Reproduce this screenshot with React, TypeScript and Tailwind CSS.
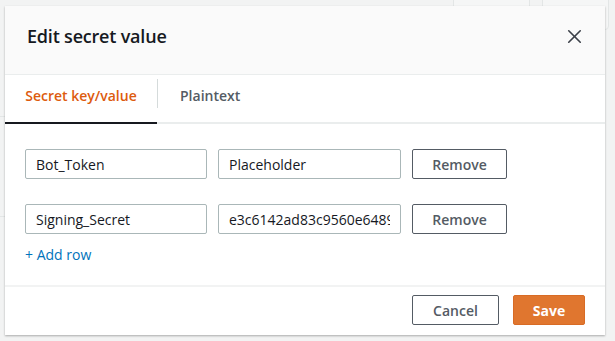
import { X } from "lucide-react";

const rows = [
  { key: "Bot_Token", value: "Placeholder" },
  { key: "Signing_Secret", value: "e3c6142ad83c9560e6489f1" },
];

const fieldClass =
  "w-[182px] h-[30px] border border-[#aab7b8] rounded-[2px] px-[10px] text-[14px] text-[#16191f] bg-white outline-none";

export default function App() {
  return (
    <div
      className="relative w-[615px] h-[341px] overflow-hidden bg-[#f2f3f3] text-[#16191f]"
      style={{ fontFamily: '"Open Sans", "Noto Sans", sans-serif' }}
    >
      {/* faded page content behind the dialog */}
      <div className="absolute left-[453px] top-[-4px] w-[77px] h-[34px] rounded border border-[#e3e6e6] bg-[#f5f6f6]" />
      <div className="absolute left-[542px] top-[-4px] w-[67px] h-[34px] rounded border border-[#e3e6e6] bg-[#f5f6f6]" />
      <div className="absolute left-0 top-[116px] w-[5px] border-t border-[#e3e6e6]" />
      <div className="absolute left-0 top-[216px] w-[5px] border-t border-[#e3e6e6]" />

      <div className="relative ml-[5px] mt-[6px] w-[600px] bg-white shadow-[0_1px_2px_rgba(0,0,0,0.3)]">
        <div className="h-[69px] flex items-center justify-between pl-[22px] pr-[19px] pb-[7px] bg-[#fafafa] border-b border-[#eaeded]">
          <h2 className="text-[18px] font-semibold tracking-[-0.2px] text-[#16191f]">Edit secret value</h2>
          <X size={23} strokeWidth={1.7} className="text-[#3b4048]" />
        </div>

        <div className="flex h-[49px] border-b-2 border-[#eaeded]">
          <div className="relative w-[152px] flex items-center justify-center pb-[6px] text-[14px] font-semibold text-[#dd5b0e]">
            Secret key/value
            <span className="absolute left-0 right-0 bottom-[-2px] h-[2px] bg-[#16191f]" />
          </div>
          <div className="w-px h-[29px] mt-[4px] bg-[#d5dbdb]" />
          <div className="flex items-center pl-[22px] pb-[6px] text-[14px] font-semibold text-[#545b64]">Plaintext</div>
        </div>

        <div className="pl-[20px] pt-[25px] pb-[20px] border-b-2 border-[#f2f3f3]">
          <div className="flex flex-col gap-[25px]">
            {rows.map((row) => (
              <div key={row.key} className="flex gap-[11px]">
                <input readOnly value={row.key} className={fieldClass} />
                <input readOnly value={row.value} className={`${fieldClass} w-[183px]`} />
                <button className="w-[95px] h-[30px] border border-[#545b64] rounded-[2px] text-[14px] font-semibold text-[#545b64]">
                  Remove
                </button>
              </div>
            ))}
          </div>
          <div className="mt-[10px] text-[14px] text-[#0073bb]">+ Add row</div>
        </div>

        <div className="flex justify-end gap-[14px] pr-[20px] pt-[8px] pb-[10px]">
          <button className="w-[87px] h-[30px] border border-[#545b64] rounded-[2px] text-[14px] font-semibold text-[#545b64]">
            Cancel
          </button>
          <button className="w-[72px] h-[30px] rounded-[2px] bg-[#e0762f] border border-[#d86b25] text-[14px] font-bold text-white">
            Save
          </button>
        </div>
      </div>
    </div>
  );
}
